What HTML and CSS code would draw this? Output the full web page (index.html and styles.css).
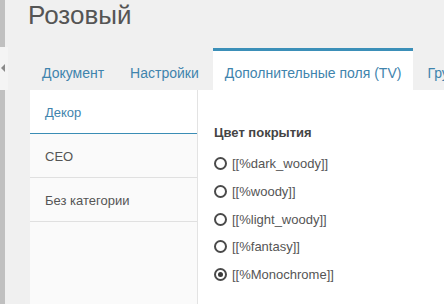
FILE: index.html
```html
<!DOCTYPE html>
<html lang="ru">
<head>
    <meta charset="UTF-8">
    <meta name="viewport" content="width=device-width, initial-scale=1.0">
    <title>Розовый</title>
    <link rel="stylesheet" href="styles.css">
</head>
<body>
    <div class="sidebar-edge"></div>
    <div class="sidebar-toggle"><span class="arrow"></span></div>
    <div class="main">
        <h1 class="page-title">Розовый</h1>
        <div class="tabs">
            <a class="tab">Документ</a>
            <a class="tab">Настройки</a>
            <a class="tab active">Дополнительные поля (TV)</a>
            <a class="tab">Группы ресурсов</a>
        </div>
        <div class="panel">
            <div class="vtabs">
                <div class="vtab active">Декор</div>
                <div class="vtab">СЕО</div>
                <div class="vtab">Без категории</div>
            </div>
            <div class="tv-content">
                <div class="tv-label">Цвет покрытия</div>
                <label class="option"><span class="radio"></span>[[%dark_woody]]</label>
                <label class="option"><span class="radio"></span>[[%woody]]</label>
                <label class="option"><span class="radio"></span>[[%light_woody]]</label>
                <label class="option"><span class="radio"></span>[[%fantasy]]</label>
                <label class="option"><span class="radio checked"></span>[[%Monochrome]]</label>
            </div>
        </div>
    </div>
</body>
</html>
```
FILE: styles.css
```css
body {
    margin: 0;
    background: #f0f0f0;
    font-family: "Liberation Sans", Arial, sans-serif;
    color: #555;
    height: 304px;
    overflow: hidden;
    display: flex;
}
.sidebar-edge {
    width: 5px;
    background: #c0c0c0;
    flex-shrink: 0;
}
.sidebar-toggle {
    position: absolute;
    top: 47px;
    left: 0;
    width: 8px;
    height: 43px;
    background: #f4f4f4;
}
.sidebar-toggle .arrow {
    position: absolute;
    top: 64px;
    top: 17px;
    left: 1px;
    border-top: 4px solid transparent;
    border-bottom: 4px solid transparent;
    border-right: 4px solid #8a8a8a;
}
.main {
    flex: 1;
    padding-left: 25px;
    min-width: 0;
}
.page-title {
    margin: 0 0 18px -2px;
    font-size: 26px;
    line-height: 30px;
    font-weight: normal;
    color: #555;
}
.tabs {
    display: flex;
    white-space: nowrap;
}
.tab {
    border-top: 3px solid transparent;
    padding: 12px 12px 7px;
    margin-right: 2px;
    font-size: 14px;
    line-height: 20px;
    color: #3f84ad;
    cursor: pointer;
}
.tab.active {
    background: #fff;
    border-top-color: #3b8fb8;
}
.panel {
    display: flex;
    background: #fff;
    height: 214px;
}
.vtabs {
    width: 167px;
    background: #fafafa;
    border-right: 1px solid #e3e3e3;
    flex-shrink: 0;
}
.vtab {
    padding: 14px 15px 11px;
    font-size: 13px;
    line-height: 18px;
    color: #555;
    border-bottom: 1px solid #e0e0e0;
}
.vtab.active {
    background: #fff;
    color: #3f84ad;
    border-bottom-color: #3b8db5;
}
.tv-content {
    padding: 34px 0 0 16px;
}
.tv-label {
    font-size: 13px;
    line-height: 18px;
    font-weight: bold;
    color: #444;
    margin-bottom: 8px;
}
.option {
    display: flex;
    align-items: center;
    height: 27.7px;
    font-size: 13px;
    color: #555;
}
.radio {
    width: 9px;
    height: 9px;
    border: 2.5px solid #4a4a4a;
    border-radius: 50%;
    margin-right: 5px;
    position: relative;
}
.radio.checked::after {
    content: "";
    position: absolute;
    top: 2px;
    left: 2px;
    width: 5px;
    height: 5px;
    border-radius: 50%;
    background: #3a3a3a;
}
```
